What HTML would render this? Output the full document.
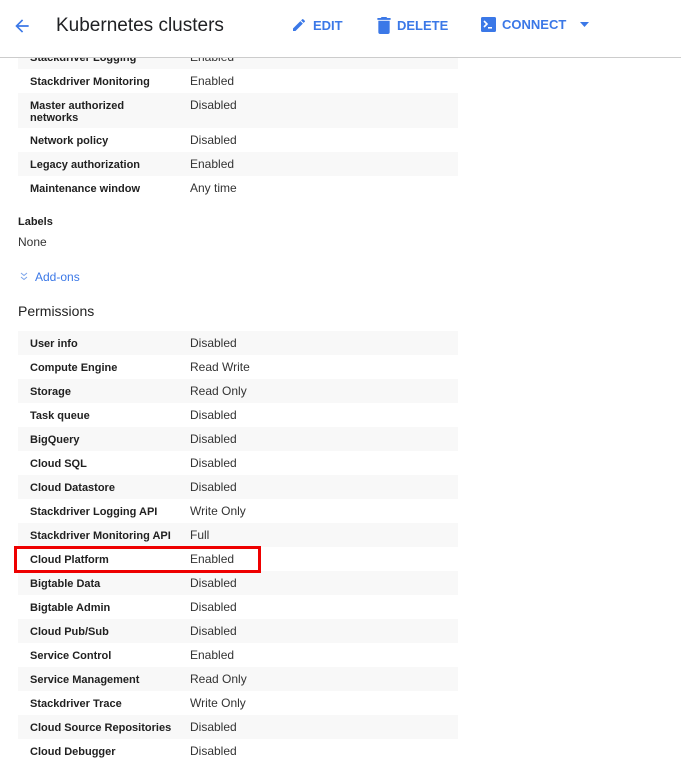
<!DOCTYPE html>
<html><head><style>
*{margin:0;padding:0;box-sizing:border-box}
body{width:681px;height:772px;overflow:hidden;background:#fff;font-family:"Liberation Sans",Arial,sans-serif;position:relative;color:#212121}
.hdr{position:absolute;left:0;top:0;width:681px;height:58px;border-bottom:1px solid #ccc;background:#fff;z-index:2}
.t{position:absolute;left:56px;top:15px;font-size:19px;color:#202124}
.btn{position:absolute;top:17px;font-size:13px;font-weight:bold;color:#3b78e7;display:flex;align-items:center;gap:6px}
.row{position:absolute;left:18px;width:440px;height:24px;font-size:12px}
.row.s{background:#f8f8f8}
.row b{position:absolute;left:12px;top:7px;font-size:11px;color:#212121}
.row span{position:absolute;left:172px;top:5px;color:#333}
</style></head><body>
<div class="hdr">
<svg style="position:absolute;left:12px;top:16px" width="20" height="20" viewBox="0 0 24 24"><path d="M20 11H7.8l5.6-5.6L12 4l-8 8 8 8 1.4-1.4L7.8 13H20z" fill="#3b78e7"/></svg>
<div class="t">Kubernetes clusters</div>
<div class="btn" style="left:291px"><svg width="16" height="16" viewBox="0 0 24 24"><path d="M3 17.25V21h3.75L17.8 9.94l-3.75-3.75zM20.7 7.04a1 1 0 000-1.41l-2.34-2.34a1 1 0 00-1.41 0l-1.83 1.83 3.75 3.75z" fill="#3b78e7"/></svg>EDIT</div>
<div class="btn" style="left:377px"><svg width="14" height="17" viewBox="0 0 14 18"><path d="M1 16a2 2 0 002 2h8a2 2 0 002-2V4H1zM14 1h-3.5l-1-1h-5l-1 1H0v2h14z" fill="#3b78e7"/></svg>DELETE</div>
<div class="btn" style="left:481px"><svg width="15" height="15" viewBox="0 0 15 15"><rect width="15" height="15" rx="1.5" fill="#3b78e7"/><path d="M3 4l3 3-3 3" stroke="#fff" stroke-width="1.6" fill="none"/><rect x="7" y="10" width="4" height="1.6" fill="#fff"/></svg>CONNECT<svg style="margin-left:8px" width="9" height="5"><path d="M0 0h9L4.5 5z" fill="#3b78e7"/></svg></div>
</div>
<div class="row s" style="top:45px"><b>Stackdriver Logging</b><span>Enabled</span></div>
<div class="row" style="top:69px"><b>Stackdriver Monitoring</b><span>Enabled</span></div>
<div class="row s" style="top:93px;height:35px"><b style="line-height:12px">Master authorized<br>networks</b><span>Disabled</span></div>
<div class="row" style="top:128px"><b>Network policy</b><span>Disabled</span></div>
<div class="row s" style="top:152px"><b>Legacy authorization</b><span>Enabled</span></div>
<div class="row" style="top:176px"><b>Maintenance window</b><span>Any time</span></div>
<div style="position:absolute;left:18px;top:216px;font-size:11px;font-weight:bold">Labels</div>
<div style="position:absolute;left:18px;top:235px;font-size:12px;color:#333">None</div>
<svg style="position:absolute;left:20px;top:272px" width="8" height="9" viewBox="0 0 8 9"><path d="M1 1l3 2.5L7 1M1 5l3 2.5L7 5" stroke="#7aa3ea" stroke-width="1" fill="none"/></svg>
<div style="position:absolute;left:35px;top:270px;font-size:12px;color:#3b78e7">Add-ons</div>
<div style="position:absolute;left:18px;top:303px;font-size:14px;color:#222">Permissions</div>
<div class="row s" style="top:331px"><b>User info</b><span>Disabled</span></div>
<div class="row" style="top:355px"><b>Compute Engine</b><span>Read Write</span></div>
<div class="row s" style="top:379px"><b>Storage</b><span>Read Only</span></div>
<div class="row" style="top:403px"><b>Task queue</b><span>Disabled</span></div>
<div class="row s" style="top:427px"><b>BigQuery</b><span>Disabled</span></div>
<div class="row" style="top:451px"><b>Cloud SQL</b><span>Disabled</span></div>
<div class="row s" style="top:475px"><b>Cloud Datastore</b><span>Disabled</span></div>
<div class="row" style="top:499px"><b>Stackdriver Logging API</b><span>Write Only</span></div>
<div class="row s" style="top:523px"><b>Stackdriver Monitoring API</b><span>Full</span></div>
<div class="row" style="top:547px"><b>Cloud Platform</b><span>Enabled</span></div>
<div class="row s" style="top:571px"><b>Bigtable Data</b><span>Disabled</span></div>
<div class="row" style="top:595px"><b>Bigtable Admin</b><span>Disabled</span></div>
<div class="row s" style="top:619px"><b>Cloud Pub/Sub</b><span>Disabled</span></div>
<div class="row" style="top:643px"><b>Service Control</b><span>Enabled</span></div>
<div class="row s" style="top:667px"><b>Service Management</b><span>Read Only</span></div>
<div class="row" style="top:691px"><b>Stackdriver Trace</b><span>Write Only</span></div>
<div class="row s" style="top:715px"><b>Cloud Source Repositories</b><span>Disabled</span></div>
<div class="row" style="top:739px"><b>Cloud Debugger</b><span>Disabled</span></div>
<div style="position:absolute;left:14px;top:546px;width:247px;height:27px;border:3px solid #e00"></div>
</body></html>
